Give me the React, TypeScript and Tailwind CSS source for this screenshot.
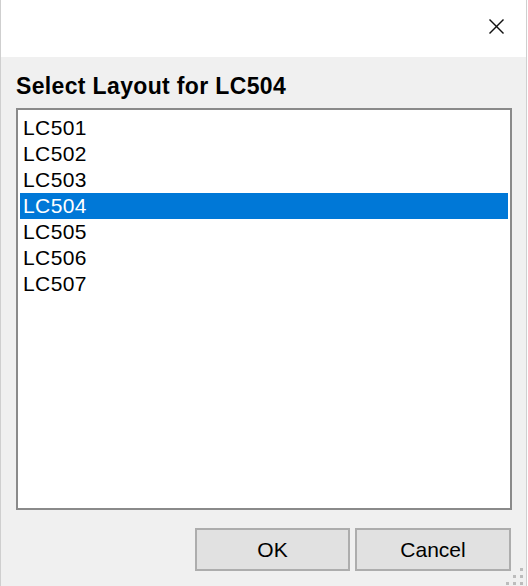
import { useState } from 'react';

const layouts = ['LC501', 'LC502', 'LC503', 'LC504', 'LC505', 'LC506', 'LC507'];

function ResizeGrip() {
  const dots = [
    [14, 0],
    [7, 7],
    [14, 7],
    [0, 14],
    [7, 14],
    [14, 14],
  ];
  return (
    <div className="absolute right-[3px] bottom-[1px] w-[17px] h-[17px]">
      {dots.map(([x, y], i) => (
        <span
          key={i}
          className="absolute w-[3px] h-[3px] bg-[#bcbcbc]"
          style={{ left: x, top: y }}
        />
      ))}
    </div>
  );
}

export default function App() {
  const [selected, setSelected] = useState('LC504');

  return (
    <div className="w-[528px] h-[586px] bg-white">
      <div
        className="relative w-[527px] h-[586px] flex flex-col bg-[#f0f0f0] border-l border-r border-[#cfcfcf]"
        style={{ fontFamily: '"Liberation Sans", Arial, sans-serif' }}
      >
        {/* title bar */}
        <div className="h-[57px] bg-white flex items-start justify-end pr-[22px] pt-[19px]">
          <svg width="15" height="15" viewBox="0 0 15 15" fill="none" stroke="#111" strokeWidth="1.4">
            <line x1="0.5" y1="0.5" x2="14.5" y2="14.5" />
            <line x1="14.5" y1="0.5" x2="0.5" y2="14.5" />
          </svg>
        </div>

        <div className="flex flex-col flex-1 pl-[15px] pr-[14px]">
          <h1 className="pt-[16px] h-[51px] text-[23px] leading-[27px] font-bold text-black tracking-[0.35px]">
            Select Layout for LC504
          </h1>

          <div className="h-[402px] bg-white border-2 border-[#8a8a8a] px-[2px] pt-[5px]">
            {layouts.map((name) => (
              <div
                key={name}
                onClick={() => setSelected(name)}
                className={
                  name === selected
                    ? 'h-[26px] leading-[26px] pl-[3px] text-[21px] tracking-[0.4px] bg-[#0078d7] text-white'
                    : 'h-[26px] leading-[26px] pl-[3px] text-[21px] tracking-[0.4px] text-black'
                }
              >
                {name}
              </div>
            ))}
          </div>

          <div className="flex justify-end gap-[5px] pt-[18px] pr-[1px]">
            <button className="w-[155px] h-[43px] bg-[#e1e1e1] border-2 border-[#adadad] text-[21px] text-black">
              OK
            </button>
            <button className="w-[156px] h-[43px] bg-[#e1e1e1] border-2 border-[#adadad] text-[21px] text-black">
              Cancel
            </button>
          </div>
        </div>

        <ResizeGrip />
      </div>
    </div>
  );
}
